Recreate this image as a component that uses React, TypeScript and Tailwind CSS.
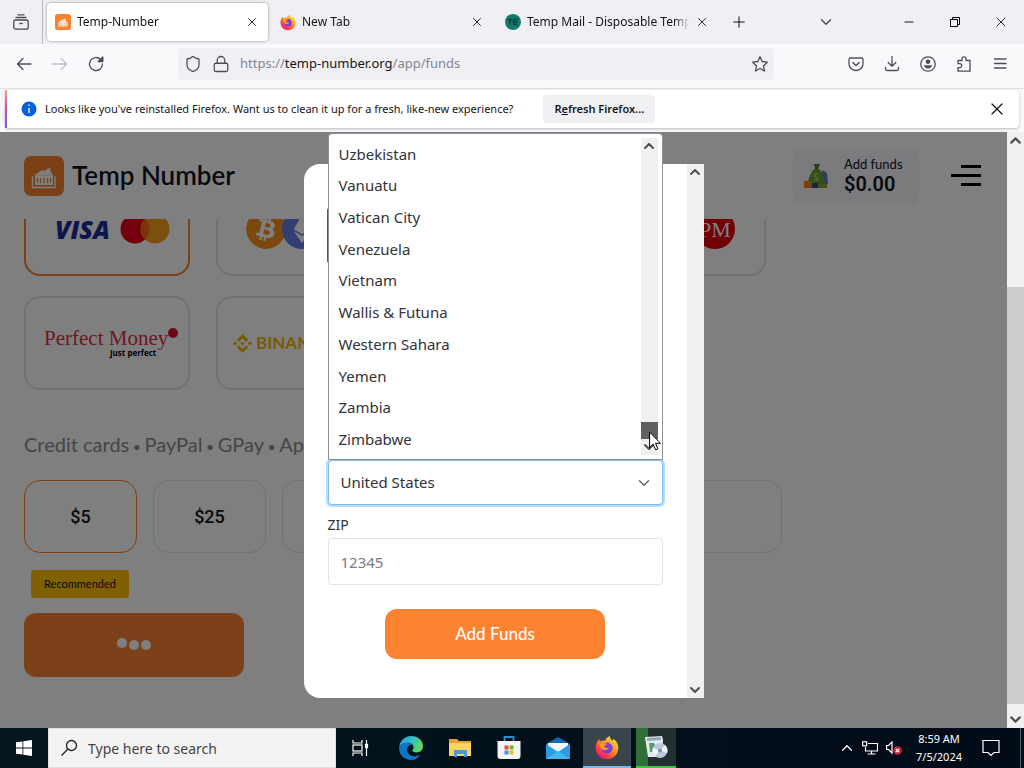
import type { ReactNode } from "react";
import { ChevronDown, ChevronUp, Lock, Minus, Plus, Shield, X } from "lucide-react";
import { FaEthereum } from "react-icons/fa";
import { SiBinance, SiBitcoin } from "react-icons/si";

const countries = [
  "Uzbekistan",
  "Vanuatu",
  "Vatican City",
  "Venezuela",
  "Vietnam",
  "Wallis & Futuna",
  "Western Sahara",
  "Yemen",
  "Zambia",
  "Zimbabwe",
];

function FirefoxLogo({ className }: { className: string }) {
  return (
    <svg viewBox="0 0 24 24" className={className} aria-hidden="true">
      <defs>
        <linearGradient id="fx-flame" x1="0.85" y1="0.1" x2="0.2" y2="0.95">
          <stop offset="0" stopColor="#ffe03b" />
          <stop offset="0.45" stopColor="#ff8a1c" />
          <stop offset="0.8" stopColor="#fb3650" />
          <stop offset="1" stopColor="#e21586" />
        </linearGradient>
      </defs>
      <path
        d="M15 1c-.4 2 .8 3.200 2.600 4.700.6-.5.600-1.200.4-2C21 5.500 23.500 9 23.300 13A11.300 11.300 0 0 1 .7 13C.6 9.400 2 6 4.200 4c0 1 .2 1.800.9 2.300C6.600 5.500 8.200 5.300 10 5.700 11 3.500 12.700 1.700 15 1z"
        fill="url(#fx-flame)"
      />
      <circle cx="12" cy="13" r="5.600" fill="#7a3be8" />
      <path d="M4.500 8.500c3-1.500 6-.8 8 1-2 0-3 .6-3.200 2 .8 1.500 3 1.800 4.600 1-1 2.800-4 3.500-6.200 2C5.500 13.300 4.600 11 4.500 8.500z" fill="#ff9a1f" />
    </svg>
  );
}

function TempNumberLogo({ className }: { className: string }) {
  return (
    <svg viewBox="0 0 40 40" className={className} aria-hidden="true">
      <rect width="40" height="40" rx="7" fill="#f9812f" />
      <path d="M11 19l7-5 2 1 7-4-1 3 2 4v1z" fill="#fff" />
      <path d="M8.500 20v11.500h22.500V20M11 19h18" fill="none" stroke="#fff" strokeWidth="1.300" />
      <rect x="11" y="20" width="18" height="9" fill="#fff" />
      <path d="M13.500 22v5M16.500 22v5M20 22v5M23.500 22v5M26.500 22v5" stroke="#f9812f" strokeWidth="1.200" />
    </svg>
  );
}

function Tab({ icon, title, active }: { icon: ReactNode; title: string; active?: boolean }) {
  return (
    <div
      className={`flex h-[38px] w-[221px] items-center gap-1 rounded px-2 ${
        active ? "bg-white shadow-[0_0_3px_rgba(0,0,0,0.4)]" : ""
      }`}
    >
      <button className="flex min-w-0 flex-1 items-center gap-1.5 text-left">
        {icon}
        <span className="flex-1 overflow-hidden whitespace-nowrap [mask-image:linear-gradient(to_right,black_90%,transparent)]">
          {title}
        </span>
      </button>
      <button aria-label={`Close ${title}`} className="flex size-4 shrink-0 items-center justify-center">
        <X className="size-3.5" strokeWidth={1.5} />
      </button>
    </div>
  );
}

function TabBar() {
  return (
    <div className="flex h-11 items-center bg-[#f0f0f4]">
      <button aria-label="Firefox View" className="flex h-full w-[43px] items-center justify-center border-r border-[#b8b8be]">
        <svg viewBox="0 0 16 16" className="size-4" fill="none" stroke="#4a4a55" strokeWidth="1.300">
          <path d="M4.500 .8h7M2.500 3.500h11" />
          <rect x=".8" y="6" width="14.400" height="9.200" rx="2" />
          <path d="M6.200 9.500h3.600" />
        </svg>
      </button>
      <div className="flex gap-1 pl-1">
        <Tab active title="Temp-Number" icon={<TempNumberLogo className="size-4 shrink-0" />} />
        <Tab title="New Tab" icon={<FirefoxLogo className="size-4 shrink-0" />} />
        <Tab
          title="Temp Mail - Disposable Temporary Email"
          icon={
            <svg viewBox="0 0 16 16" className="size-4 shrink-0" aria-hidden="true">
              <circle cx="8" cy="8" r="8" fill="#16786a" />
              <path d="M3 5.500h4M5 5.500v5M8.500 10.500v-5h4M8.500 8h4M8.500 10.500h4" stroke="#0a3f3c" strokeWidth="1.300" fill="none" />
            </svg>
          }
        />
      </div>
      <button aria-label="New tab" className="ml-2 flex size-[26px] items-center justify-center">
        <Plus className="size-[18px]" strokeWidth={1.4} />
      </button>
      <button aria-label="List all tabs" className="mr-11 ml-auto flex size-8 items-center justify-center">
        <ChevronDown className="size-[18px] text-[#4a4a55]" strokeWidth={1.8} />
      </button>
      <button aria-label="Minimize" className="flex h-full w-[46px] items-center justify-center">
        <Minus className="size-3.5" strokeWidth={1.8} />
      </button>
      <button aria-label="Restore" className="flex h-full w-[46px] items-center justify-center">
        <svg viewBox="0 0 10 10" className="size-2.5" fill="none" stroke="black">
          <path d="M.5 2.500h7v7h-7zM2.500 2.500v-2h7v7h-2" />
        </svg>
      </button>
      <button aria-label="Close window" className="flex h-full w-[46px] items-center justify-center">
        <X className="size-4" strokeWidth={1.3} />
      </button>
    </div>
  );
}

function ToolButton({ label, children }: { label: string; children: ReactNode }) {
  return (
    <button aria-label={label} className="flex size-9 items-center justify-center">
      <svg viewBox="0 0 16 16" className="size-4 overflow-visible" fill="none" stroke="#4d4d58" strokeWidth="1.300" strokeLinecap="round" strokeLinejoin="round">
        {children}
      </svg>
    </button>
  );
}

function Toolbar() {
  return (
    <div className="flex h-11 items-center bg-[#f9f9fb] px-1.5 pb-1">
      <ToolButton label="Back">
        <path d="M15 8H1.500M7 2.500L1.500 8 7 13.500" />
      </ToolButton>
      <ToolButton label="Forward">
        <path d="M1 8h13.500M9 2.500L14.500 8 9 13.500" stroke="#bdbdc3" />
      </ToolButton>
      <ToolButton label="Reload">
        <path d="M14.500 8a6.500 6.500 0 1 1-2-4.700L14.500 5" />
        <path d="M14.800 1v4.500h-4.500z" fill="#4d4d58" />
      </ToolButton>
      <div className="mx-16 flex h-8 flex-1 items-center gap-2.5 rounded bg-[#f0f0f4] px-1.5">
        <Shield className="size-[18px] text-[#4d4d58]" strokeWidth={1.7} />
        <Lock className="size-[18px] text-[#4d4d58]" strokeWidth={1.7} />
        <div role="textbox" aria-label="Address" className="flex-1 text-[13px] text-[#85858f]">
          https://<span className="text-[#15141a]">temp-number.org</span>/app/funds
        </div>
        <button aria-label="Bookmark this page">
          <svg viewBox="0 0 16 16" className="size-4 overflow-visible" fill="none" stroke="#4d4d58" strokeWidth="1.300" strokeLinejoin="round">
            <path d="M8 .8l2.200 4.700 5.100.7-3.700 3.600.9 5.200L8 12.500 3.500 15l.9-5.200L.7 6.200l5.100-.7z" />
          </svg>
        </button>
      </div>
      <ToolButton label="Save to Pocket">
        <path d="M2.500 2h11A1.500 1.500 0 0 1 15 3.500V8A7 6.500 0 0 1 1 8V3.500A1.500 1.500 0 0 1 2.500 2zM4.800 6.500L8 9.500l3.200-3" />
      </ToolButton>
      <ToolButton label="Downloads">
        <path d="M8 .5v9.800M4.200 6.500L8 10.300l3.800-3.800M1.500 11.500V13a1.500 1.500 0 0 0 1.500 1.500h10a1.500 1.500 0 0 0 1.500-1.500v-1.500" />
      </ToolButton>
      <ToolButton label="Account">
        <circle cx="8" cy="8" r="7.200" />
        <circle cx="8" cy="5.700" r="2.300" fill="#4d4d58" stroke="none" />
        <path d="M4 9.300h8c0 2-1.800 3.200-4 3.200s-4-1.200-4-3.200z" fill="#4d4d58" stroke="none" />
      </ToolButton>
      <ToolButton label="Extensions">
        <path d="M2 4.500h4V2.800a2 2 0 0 1 4 0v1.700h4v10.700H2v-3.500h1.700a2 2 0 0 0 0-4H2z" />
      </ToolButton>
      <ToolButton label="Menu">
        <path d="M2.500 3h11.500M2.500 7.500h11.500M2.500 12h11.500" />
      </ToolButton>
    </div>
  );
}

function InfoBar() {
  return (
    <div className="h-11 border-t border-[#dedee3] bg-[#f9f9fb] px-[5px] pt-px pb-1">
      <div className="flex h-full items-center rounded bg-white pr-3 text-[11px] shadow-[0_1px_3px_rgba(0,0,0,0.25)]">
        <span className="h-full w-0.5 bg-linear-to-b from-[#ff9a6a] via-[#c04fb5] to-[#8a4fd6]" />
        <svg viewBox="0 0 16 16" className="mr-2 ml-3.5 size-4" aria-hidden="true">
          <circle cx="8" cy="8" r="7.500" fill="#0560df" />
          <path d="M8 3.500v1.500M8 7v5" stroke="white" strokeWidth="1.300" />
        </svg>
        <span>Looks like you've reinstalled Firefox. Want us to clean it up for a fresh, like-new experience?</span>
        <button className="ml-[30px] h-7 rounded bg-[#f0f0f2] px-[11px] font-semibold">
          R<u>e</u>fresh Firefox...
        </button>
        <button aria-label="Dismiss" className="ml-auto">
          <X className="size-5" strokeWidth={1.5} />
        </button>
      </div>
    </div>
  );
}

function PageHeader() {
  return (
    <header className="flex h-[87px] shrink-0 items-center pr-[26px] pl-6">
      <TempNumberLogo className="size-10" />
      <span className="ml-2 text-[26px] font-semibold text-[#10131f]">Temp Number</span>
      <a href="#funds" className="ml-auto flex h-14 w-[126px] items-center rounded-lg bg-[#f6f6fb] pl-[11px]">
        <svg viewBox="0 0 24 28" className="h-7 w-6" aria-hidden="true">
          <path d="M10 2h6l-2 5h-3z" fill="#4d7a45" />
          <path d="M10 7h5c4 4 7 9 7 14 0 4-18 4-18 0 0-5 3-10 6-14z" fill="#5d9c3c" />
          <path d="M18 8l5 3 1 11-4 2z" fill="#5c7fae" />
          <path d="M15 12h-4c-2 4 4 3 3 6h-4" stroke="#c4c93c" strokeWidth="1.500" fill="none" />
          <rect y="19" width="8" height="7" fill="#ee7d1c" />
          <rect x="8" y="21" width="6" height="5" fill="#274e7b" />
          <path d="M14 22h9v4h-9z" fill="#8f9e28" />
        </svg>
        <span className="ml-4 flex flex-col">
          <span className="text-[13px] leading-4 text-[#10131f]">Add funds</span>
          <span className="font-['Roboto'] text-xl leading-6 font-semibold text-[#10131f]">$0.00</span>
        </span>
      </a>
      <button aria-label="Open menu" className="ml-8 flex w-[30px] flex-col items-end gap-1.5">
        <span className="h-[3px] w-5 bg-black" />
        <span className="h-[3px] w-full bg-black" />
        <span className="h-[3px] w-5 bg-black" />
      </button>
    </header>
  );
}

function MethodCard({ label, selected, children }: { label: string; selected?: boolean; children?: ReactNode }) {
  return (
    <button
      aria-label={label}
      className={`flex h-[94px] w-[166px] shrink-0 items-center overflow-hidden rounded-2xl border-2 ${
        selected ? "border-[#f9812f]" : "border-[#e2e2e6]"
      }`}
    >
      {children}
    </button>
  );
}

function Bullet() {
  return <span className="text-sm"> • </span>;
}

function FundsPage() {
  return (
    <main className="flex min-h-0 flex-1 flex-col overflow-hidden px-6">
      <div className="-mt-[37px] flex gap-[26px]">
        <MethodCard label="Cards" selected>
          <span className="ml-[29px] font-['Open_Sans'] text-[25px] leading-none font-extrabold text-[#1c2b9c] italic">VISA</span>
          <svg viewBox="0 0 50 30" className="ml-2.5 h-[30px] w-[50px]" aria-hidden="true">
            <circle cx="15" cy="15" r="14.500" fill="#eb001b" />
            <circle cx="35" cy="15" r="14.500" fill="#f79e1b" />
            <path d="M25 4.500a14.500 14.500 0 0 1 0 21 14.500 14.500 0 0 1 0-21z" fill="#f26a12" />
          </svg>
        </MethodCard>
        <MethodCard label="Crypto">
          <SiBitcoin className="ml-7 size-10 shrink-0 rounded-full bg-white text-[#f7931a]" />
          <span className="-ml-1 flex size-10 shrink-0 items-center justify-center rounded-full bg-[#627eea]">
            <FaEthereum className="size-7 text-white" />
          </span>
        </MethodCard>
        <MethodCard label="Wallet" />
        <MethodCard label="PM">
          <span className="mr-[29px] ml-auto flex size-10 items-center justify-center rounded-full bg-[#e3000f] font-['Liberation_Serif'] text-[22px] text-white">
            PM
          </span>
        </MethodCard>
      </div>
      <div className="mt-5 flex gap-[26px]">
        <MethodCard label="Perfect Money">
          <span className="ml-[18px] flex flex-col items-end font-['Liberation_Serif'] whitespace-nowrap text-[#dc2f3c]">
            <span className="text-[21px] leading-5">Perfect Money</span>
            <span className="pr-3 font-['Open_Sans'] text-[8px] leading-[10px] font-bold text-black">Just perfect</span>
          </span>
          <span className="mb-5 size-2.5 shrink-0 rounded-full bg-[#d5122a]" />
        </MethodCard>
        <MethodCard label="Binance">
          <SiBinance className="ml-[15px] size-[19px] shrink-0 text-[#f0b90b]" />
          <span className="ml-1 text-[17px] font-bold text-[#f0b90b]">BINANCE</span>
        </MethodCard>
      </div>
      <h2 className="mt-[38px] text-xl leading-8 whitespace-nowrap text-[#8b8b90]">
        Credit cards
        <Bullet />
        PayPal
        <Bullet />
        GPay
        <Bullet />
        Apple Pay
      </h2>
      <div className="mt-5 flex gap-4 font-['Roboto'] text-lg font-medium">
        <button className="h-[73px] w-[113px] rounded-2xl border border-[#f9812f]">$5</button>
        <button className="h-[73px] w-[113px] rounded-2xl border border-[#e2e2e6]">$25</button>
        <button aria-label="$50" className="h-[73px] w-[113px] rounded-2xl border border-[#e2e2e6]" />
        <button aria-label="$100" className="h-[73px] w-[113px] rounded-2xl border border-[#e2e2e6]" />
        <input aria-label="Custom amount" className="h-[73px] w-[242px] rounded-2xl border border-[#e2e2e6] px-6" />
      </div>
      <span className="mt-[17px] ml-[7px] w-[98px] rounded-sm bg-[#ffc107] text-center text-[11px] leading-7">Recommended</span>
      <button aria-label="Loading" className="mt-[15px] flex h-16 w-[220px] shrink-0 items-center justify-center gap-0.5 rounded-xl bg-[#fb8332]">
        <span className="mb-1 size-2.5 rounded-full bg-white" />
        <span className="size-2.5 rounded-full bg-white" />
        <span className="size-2.5 rounded-full bg-white" />
      </button>
    </main>
  );
}

function CountryList() {
  return (
    <div className="absolute inset-x-0 bottom-full z-10 flex h-[327px] rounded-t-sm border border-[#8f8f9d] bg-white py-1 pr-1">
      <ul role="listbox" aria-label="Countries" className="flex flex-1 flex-col pl-2.5">
        {countries.map((country) => (
          <li key={country} role="option" aria-selected={false} className="flex flex-1 items-center">
            {country}
          </li>
        ))}
      </ul>
      <div className="relative flex w-[17px] flex-col items-center bg-[#f0f0f0] text-[#505050]">
        <ChevronUp className="size-4" strokeWidth={3} />
        <span className="mt-auto h-[17px] w-full bg-[#606060]" />
        <ChevronDown className="size-4" strokeWidth={3} />
        <svg viewBox="0 0 12 20" className="absolute bottom-1 left-2 h-5 w-3" aria-hidden="true">
          <path d="M.6 1v15.500l3.600-3.400 2.400 5.700 2.300-1-2.400-5.500h5z" fill="white" stroke="black" />
        </svg>
      </div>
    </div>
  );
}

function FundsDialog() {
  return (
    <div className="absolute inset-0 flex justify-center bg-black/50 pt-8 pb-[30px]">
      <div role="dialog" aria-label="Add Funds" className="flex w-[400px] rounded-l-2xl bg-white">
        <form className="flex flex-1 flex-col px-6 pb-[39px] font-['Noto_Sans'] text-[15px] text-[#32323a]">
          <div className="-ml-px mt-[43px] h-[57px] rounded-l-sm border-l-2 border-[#0a63c9]" />
          <div className="relative mt-auto">
            <CountryList />
            <select
              aria-label="Country"
              className="block h-[45px] w-full appearance-none rounded border border-[#80bbea] bg-white px-3 shadow-[0_0_0_2px_rgba(5,140,222,0.3)]"
            >
              <option>United States</option>
            </select>
            <ChevronDown className="pointer-events-none absolute top-3.5 right-2.5 size-[18px] text-[#60606a]" strokeWidth={1.8} />
          </div>
          <label htmlFor="zip" className="mt-2.5 text-sm leading-5">
            ZIP
          </label>
          <input
            id="zip"
            placeholder="12345"
            className="mt-[3px] h-[47px] rounded border border-[#e3e3e6] px-3 placeholder:text-[#7c7c84]"
          />
          <button
            type="button"
            className="mt-6 h-[50px] w-[220px] self-center rounded-xl bg-[#fb8332] font-['Lato'] text-[17px] font-medium text-white"
          >
            Add Funds
          </button>
        </form>
        <div className="flex w-[17px] flex-col items-center justify-between bg-[#f0f0f0] text-[#505050]">
          <ChevronUp className="size-4" strokeWidth={3} />
          <ChevronDown className="size-4" strokeWidth={3} />
        </div>
      </div>
    </div>
  );
}

function TaskButton({ label, className = "", children }: { label: string; className?: string; children: ReactNode }) {
  return (
    <button aria-label={label} className={`flex h-full w-12 items-center justify-center ${className}`}>
      {children}
    </button>
  );
}

function Taskbar() {
  return (
    <footer className="flex h-10 shrink-0 bg-linear-to-r from-[#03161d] to-[#020b18] text-white">
      <TaskButton label="Start">
        <svg viewBox="0 0 16 16" className="size-4" fill="white">
          <path d="M0 2.300L6.500 1.400v6.200H0zM7.300 1.300L16 0v7.600H7.300zM0 8.400h6.500v6.200L0 13.700zM7.300 8.400H16V16l-8.700-1.200z" />
        </svg>
      </TaskButton>
      <label className="flex w-72 items-center gap-[11px] border border-[#dcdfe2] bg-[#f3f3f3] pl-3">
        <svg viewBox="0 0 16 16" className="size-4 overflow-visible" fill="none" stroke="#222" strokeWidth="1.300">
          <circle cx="10.500" cy="5.500" r="5" />
          <path d="M7 9L.5 15.500" />
        </svg>
        <input aria-label="Search" placeholder="Type here to search" className="min-w-0 flex-1 text-[14px] placeholder:text-[#444]" />
      </label>
      <TaskButton label="Task View">
        <svg viewBox="0 0 18 18" className="size-[18px]" fill="none" stroke="white" strokeWidth="1.200">
          <path d="M2 1v3h9V1M2 17v-3h9v3M15.500 1v16" />
          <rect x="2" y="6" width="9" height="6" />
          <rect x="14.500" y="5.500" width="2" height="3" fill="white" />
        </svg>
      </TaskButton>
      <div className="flex gap-px pl-[3px]">
        <TaskButton label="Edge">
          <svg viewBox="0 0 24 24" className="size-6">
            <defs>
              <linearGradient id="edge-top" x1="0" y1="0" x2="1" y2="0.3">
                <stop offset="0" stopColor="#1f9de0" />
                <stop offset="0.6" stopColor="#35c1c0" />
                <stop offset="1" stopColor="#5fd85b" />
              </linearGradient>
            </defs>
            <path d="M.2 11C1 4.500 6 0 12.200 0 19 0 24 4.800 24 10.300c0 3.700-2.800 6.200-6.300 6.200-2.700 0-4.400-1-4.400-1.900 0-.7 1.200-1 1.200-3.300 0-2.500-2.300-4.500-5.500-4.500C5 6.800 1.500 8.500.2 11z" fill="url(#edge-top)" />
            <path d="M.2 11c1.300-2.700 4.600-4.200 8.600-4.200 2 0 3.600.7 4.600 1.800-3.200 0-5.200 2.500-5.200 5.200 0 4.600 4.600 7.300 9.300 6.200 1.500-.3 3-1 3.800-1.500C19.500 22 16 24 12 24 5 24-.7 18.300.2 11z" fill="#1272c4" />
          </svg>
        </TaskButton>
        <TaskButton label="File Explorer">
          <svg viewBox="0 0 22 20" className="h-5 w-[22px]">
            <path d="M0 1h8l2 2h12v15H0z" fill="#e0a52b" />
            <path d="M0 5h22v13H0z" fill="#fbd563" />
            <path d="M5 19v-7h13v7h-3v-3H8v3z" fill="#4f95d8" />
          </svg>
        </TaskButton>
        <TaskButton label="Store">
          <svg viewBox="0 0 24 24" className="size-6">
            <path d="M7.500 5V1h9v4" fill="none" stroke="#2e8fd6" strokeWidth="1.800" />
            <path d="M.5 5h23v15a3 3 0 0 1-3 3h-17a3 3 0 0 1-3-3z" fill="#f4f4f4" />
            <path d="M7.500 9.500h4v4h-4z" fill="#e8502c" />
            <path d="M12.500 9.500h4v4h-4z" fill="#79b52c" />
            <path d="M7.500 14.500h4v4h-4z" fill="#2c9fe0" />
            <path d="M12.500 14.500h4v4h-4z" fill="#f5b820" />
          </svg>
        </TaskButton>
        <TaskButton label="Mail">
          <svg viewBox="0 0 24 22" className="h-[22px] w-6">
            <path d="M0 7l12-7 12 7v15H0z" fill="#1667b5" />
            <path d="M2 6h20v9H2z" fill="#f3f7fb" />
            <path d="M0 7l12 8 12-8v15H0z" fill="#2a9be5" />
            <path d="M0 22l12-8 12 8z" fill="#43b8f2" />
          </svg>
        </TaskButton>
        <TaskButton label="Firefox" className="border-b-2 border-[#76b9ed] bg-[#3a444d]">
          <FirefoxLogo className="size-6" />
        </TaskButton>
        <TaskButton label="Installer">
          <span className="flex h-full w-10 items-center border-b-2 border-[#3fc93f] bg-[#22302f]">
            <span className="flex h-full w-3 items-center bg-[#2f7038] pl-2">
              <svg viewBox="0 0 24 24" className="size-6 shrink-0">
                <path d="M1 2l17-1 1 4-1 17H4z" fill="#e3eaee" />
                <path d="M3 3l14-1v3L3 6z" fill="#8caab8" />
                <path d="M5 8h5l2 4-4 5H6z" fill="#5a9a72" />
                <circle cx="16" cy="15.500" r="7.500" fill="#b9c6e0" />
                <path d="M16 15.500l5-5.500a7.500 7.500 0 0 1 2 8zM16 15.500l-5 5.500a7.500 7.500 0 0 1-2-8z" fill="#f2f4fb" />
                <circle cx="16" cy="15.500" r="2" fill="#7b8fb0" />
              </svg>
            </span>
          </span>
        </TaskButton>
      </div>
      <div className="ml-auto flex items-center">
        <button aria-label="Show hidden icons">
          <ChevronUp className="size-[18px]" strokeWidth={1.6} />
        </button>
        <button aria-label="Network" className="ml-1.5">
          <svg viewBox="0 0 16 14" className="h-3.5 w-4" fill="none" stroke="white" strokeWidth="1.200">
            <path d="M6 2.500h9.500v7.500H3.500V6M9.500 10v3M5.500 13h8" />
            <rect x=".6" y=".8" width="4" height="4" />
          </svg>
        </button>
        <button aria-label="Volume muted" className="ml-2">
          <svg viewBox="0 0 16 14" className="h-3.5 w-4" fill="none" stroke="white" strokeWidth="1.200">
            <path d="M.6 4.500h2L6 1v11L2.600 8.500h-2z" />
            <circle cx="11.500" cy="9.500" r="4.200" fill="#cf2438" stroke="none" />
            <path d="M9.800 7.800l3.400 3.400M13.200 7.800l-3.400 3.400" />
          </svg>
        </button>
        <div className="mx-3 w-[50px] text-center text-[11px] leading-[18px] whitespace-nowrap">
          <div>8:59 AM</div>
          <div>7/5/2024</div>
        </div>
        <button aria-label="Notifications" className="mr-5 ml-1.5">
          <svg viewBox="0 0 18 18" className="size-[18px]" fill="none" stroke="white" strokeWidth="1.200">
            <path d="M1 1.500h16v12h-5l-3 3-3-3H1z" />
          </svg>
        </button>
        <span className="mr-[3px] h-full w-px bg-[#5a6168]" />
      </div>
    </footer>
  );
}

export default function App() {
  return (
    <div className="flex h-screen flex-col overflow-hidden bg-white font-['Noto_Sans',sans-serif] text-[12px] text-[#15141a]">
      <TabBar />
      <Toolbar />
      <InfoBar />
      <div className="flex min-h-0 flex-1">
        <div className="relative flex min-w-0 flex-1 flex-col font-['Lato',sans-serif]">
          <PageHeader />
          <FundsPage />
          <FundsDialog />
        </div>
        <div className="flex w-[17px] flex-col items-center bg-[#f0f0f0] text-[#505050]">
          <ChevronUp className="size-[17px]" strokeWidth={3} />
          <span className="mt-auto h-[417px] w-full bg-[#cdcdcd]" />
          <ChevronDown className="mt-[7px] size-[17px]" strokeWidth={3} />
        </div>
      </div>
      <Taskbar />
    </div>
  );
}
